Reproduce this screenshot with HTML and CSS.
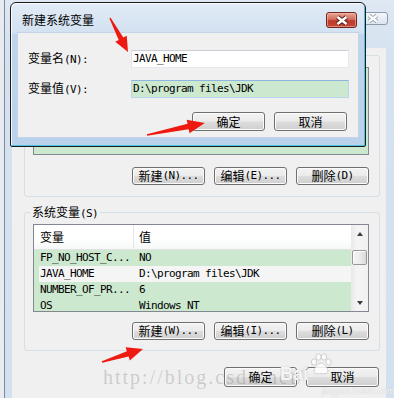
FILE: index.html
```html
<!DOCTYPE html>
<html>
<head>
<meta charset="utf-8">
<title>环境变量</title>
<link rel="stylesheet" href="styles.css">
</head>
<body>
<div class="screen">
  <div class="owin">
    <div class="otitle">
      <div class="oclose">
        <svg width="12" height="9" viewBox="0 0 12 9"><path d="M2 1.5L10 7.5M10 1.5L2 7.5" stroke="#8c97a6" stroke-width="4"/><path d="M2 1.5L10 7.5M10 1.5L2 7.5" stroke="#fff" stroke-width="2.2"/></svg>
      </div>
    </div>
    <div class="oclient">
      <fieldset class="grp">
        <legend>用户变量<span class="m">(U)</span></legend>
        <div class="lv">
          <div class="lv-main">
            <div class="lv-head"><div class="c1">变量</div><div class="c2">值</div></div>
            <div class="lv-row"><div class="c1 m">TEMP</div><div class="c2 m">%USERPROFILE%\AppData\Local\Temp</div></div>
            <div class="lv-row"><div class="c1 m">TMP</div><div class="c2 m">%USERPROFILE%\AppData\Local\Temp</div></div>
          </div>
          <div class="vs vs-empty"></div>
        </div>
        <div class="btnrow">
          <div class="btn">新建<span class="m">(N)...</span></div>
          <div class="btn">编辑<span class="m">(E)...</span></div>
          <div class="btn">删除<span class="m">(D)</span></div>
        </div>
      </fieldset>
      <fieldset class="grp grp-sys">
        <legend>系统变量<span class="m">(S)</span></legend>
        <div class="lv">
          <div class="lv-main">
            <div class="lv-head"><div class="c1">变量</div><div class="c2">值</div></div>
            <div class="lv-row"><div class="c1 m">FP_NO_HOST_C...</div><div class="c2 m">NO</div></div>
            <div class="lv-row sel"><div class="c1 m">JAVA_HOME</div><div class="c2 m">D:\program files\JDK</div></div>
            <div class="lv-row"><div class="c1 m">NUMBER_OF_PR...</div><div class="c2 m">6</div></div>
            <div class="lv-row"><div class="c1 m">OS</div><div class="c2 m">Windows_NT</div></div>
          </div>
          <div class="vs">
            <div class="vs-btn"><span class="tri-up"></span></div>
            <div class="vs-thumb"></div>
            <div class="vs-fill"></div>
            <div class="vs-btn"><span class="tri-down"></span></div>
          </div>
        </div>
        <div class="btnrow">
          <div class="btn">新建<span class="m">(W)...</span></div>
          <div class="btn">编辑<span class="m">(I)...</span></div>
          <div class="btn">删除<span class="m">(L)</span></div>
        </div>
      </fieldset>
      <div class="btnrow foot">
        <div class="btn btn-lg">确定</div>
        <div class="btn btn-lg">取消</div>
      </div>
    </div>
  </div>

  <div class="dlg">
    <div class="dlg-title">
      <span class="dlg-caption">新建系统变量</span>
      <div class="dclose">
        <svg width="14" height="11" viewBox="0 0 14 11"><path d="M2.5 2L11.5 9M11.5 2L2.5 9" stroke="#5b1f19" stroke-width="4.6"/><path d="M2.5 2L11.5 9M11.5 2L2.5 9" stroke="#fff" stroke-width="2.6"/></svg>
      </div>
    </div>
    <div class="dlg-body">
      <div class="dform">
        <div class="dlabel">变量名<span class="m">(N):</span></div>
        <div class="inp m">JAVA_HOME</div>
        <div class="dlabel">变量值<span class="m">(V):</span></div>
        <div class="inp inp-focus m">D:\program files\JDK</div>
      </div>
      <div class="dbtns">
        <div class="btn btn-d">确定</div>
        <div class="btn btn-d">取消</div>
      </div>
    </div>
  </div>

  <div class="wm">
    <span class="wm-url">http://blog.csdn.net/</span>
    <span class="wm-bai">Bai</span>
    <svg class="wm-paw" width="24" height="22" viewBox="0 0 24 22">
      <g fill="#fff" stroke="#c9c9c9" stroke-width="1">
        <ellipse cx="5" cy="9" rx="2.6" ry="3.2"/>
        <ellipse cx="9.5" cy="4" rx="2.6" ry="3.2"/>
        <ellipse cx="15" cy="4" rx="2.6" ry="3.2"/>
        <ellipse cx="19.5" cy="9" rx="2.6" ry="3.2"/>
        <path d="M12 10c-3 0-7 5-7 8s3 3 7 2.5c4 .5 7 .5 7-2.5s-4-8-7-8z"/>
      </g>
    </svg>
    <span class="wm-jy">jingyan.baidu.com</span>
  </div>

  <svg class="arrows" width="394" height="398" viewBox="0 0 394 398">
    <g fill="#ee1a12">
      <polygon transform="translate(110 18) rotate(62.1)" points="0,-0.7 23.5,-2.6 23.5,-6.5 38.5,0 23.5,6.5 23.5,2.6 0,0.7"/>
      <polygon transform="translate(147 135) rotate(-11.7)" points="0,-0.7 42,-2.8 42,-7 59,0 42,7 42,2.8 0,0.7"/>
      <polygon transform="translate(102 362) rotate(-17.6)" points="0,-0.7 27,-2.8 27,-7 43,0 27,7 27,2.8 0,0.7"/>
    </g>
  </svg>
</div>
</body>
</html>
```

FILE: styles.css
```css
* { box-sizing: border-box; }
html, body { margin: 0; padding: 0; }
body {
  width: 394px;
  height: 398px;
  overflow: hidden;
  font-family: "Noto Sans CJK SC", "Noto Sans", sans-serif;
  font-size: 12px;
  color: #000;
  background: #e8ebef;
}
.m {
  font-family: "DejaVu Sans Mono", "Liberation Mono", monospace;
  font-size: 11px;
  letter-spacing: -0.62px;
}
.screen {
  position: relative;
  width: 394px;
  height: 398px;
  overflow: hidden;
}

/* background window */
.owin {
  margin-left: 4px;
  width: 390px;
  height: 398px;
  border-left: 1px solid #7c8a9c;
  background: linear-gradient(#dfe8f3, #d6e2f0 48px, #d3e0ef);
  padding: 0 8px 0 7px;
  display: flex;
  flex-direction: column;
}
.otitle {
  height: 48px;
  flex: none;
  display: flex;
  justify-content: flex-end;
  padding-top: 12px;
}
.oclose {
  width: 30px;
  height: 13px;
  margin-right: -2px;
  border: 1px solid #8e9bad;
  border-radius: 3px;
  background: linear-gradient(#f4f7fb, #dde5ef);
  display: flex;
  align-items: center;
  justify-content: center;
}
.oclient {
  flex: 1;
  background: #f0f0f0;
  padding: 0 6px 0 12px;
}

/* group boxes */
.grp {
  margin: 0;
  padding: 0 10px 11px 8px;
  border: 1px solid #d5dfe5;
  border-radius: 3px;
  min-width: 0;
}
.grp legend {
  padding: 0 2px;
  margin-left: -3px;
  height: 14px;
  line-height: 14px;
}
.grp-sys {
  margin-top: 8px;
  padding-bottom: 10px;
}

/* list view */
.lv {
  display: flex;
  height: 88px;
  margin-top: 5px;
  border: 1px solid #828790;
  background: #cce8cf;
}
.lv-main {
  flex: 1;
  min-width: 0;
  overflow: hidden;
}
.lv-head {
  display: flex;
  height: 25px;
  line-height: 24px;
  border-bottom: 1px solid #e2e2e2;
  background: linear-gradient(#ffffff, #ffffff 55%, #f6f7f8);
}
.lv-head .c1 { border-right: 1px solid #e5e5e5; }
.c1 {
  flex: none;
  width: 100px;
  padding-left: 6px;
  white-space: nowrap;
  overflow: hidden;
}
.c2 {
  flex: 1;
  padding-left: 5px;
  white-space: nowrap;
  overflow: hidden;
}
.lv-row {
  display: flex;
  height: 16px;
  line-height: 16px;
}
.lv-row.sel {
  margin-left: 5px;
  background: #f5f5f5;
}
.lv-row.sel .c1 {
  width: 95px;
  padding-left: 1px;
}

/* scrollbar */
.vs {
  flex: none;
  width: 17px;
  display: flex;
  flex-direction: column;
  background: linear-gradient(90deg, #e9e9e9, #f4f4f4 35%, #f1f1f1);
}
.vs-empty { background: #cce8cf; }
.vs-btn {
  height: 17px;
  flex: none;
  display: flex;
  align-items: center;
  justify-content: center;
}
.tri-up {
  width: 0;
  height: 0;
  border-left: 3.5px solid transparent;
  border-right: 3.5px solid transparent;
  border-bottom: 4px solid #3c3c3c;
}
.tri-down {
  width: 0;
  height: 0;
  border-left: 3.5px solid transparent;
  border-right: 3.5px solid transparent;
  border-top: 4px solid #3c3c3c;
}
.vs-thumb {
  flex: none;
  height: 15px;
  margin: 8px 1px 0;
  border: 1px solid #989898;
  border-radius: 2px;
  background: linear-gradient(90deg, #f4f4f4, #ececec 50%, #dadada);
  box-shadow: inset 1px 1px 0 #fff;
}
.vs-fill { flex: 1; }

/* buttons */
.btnrow {
  display: flex;
  justify-content: flex-end;
  gap: 9px;
  margin-top: 12px;
}
.grp-sys .btnrow { margin-top: 10px; }
.btn {
  width: 73px;
  height: 18px;
  border: 1px solid #707070;
  border-radius: 3px;
  background: linear-gradient(#f3f3f3, #ebebeb 48%, #dddddd 52%, #cfcfcf);
  box-shadow: inset 0 0 0 1px #fbfbfb;
  display: flex;
  align-items: center;
  justify-content: center;
  line-height: 14px;
  white-space: nowrap;
}
.foot {
  margin-top: 16px;
  padding-right: 1px;
}
.btn-lg { height: 20px; }

/* foreground dialog */
.dlg {
  position: absolute;
  left: 10px;
  top: 2px;
  width: 356px;
  height: 145px;
  border: 1px solid #1b1b1b;
  border-radius: 6px 6px 2px 2px;
  background: linear-gradient(#e2ebf6, #d2e1f1 30px, #bed5ed 32px, #b9d1ea);
  box-shadow: inset 1px 1px 0 rgba(255, 255, 255, 0.85), inset -1px -1px 0 #4cc3e2;
  display: flex;
  flex-direction: column;
}
.dlg-title {
  height: 29px;
  flex: none;
  display: flex;
  align-items: flex-start;
  padding: 10px 8px 0 11px;
}
.dlg-caption {
  line-height: 14px;
}
.dclose {
  margin-left: auto;
  margin-top: -1px;
  width: 31px;
  height: 16px;
  border: 1px solid #6e2620;
  border-radius: 3px;
  background: linear-gradient(#e9a595, #d0705f 45%, #c0392b 55%, #c44a37);
  box-shadow: inset 0 0 0 1px rgba(255, 200, 190, 0.5);
  display: flex;
  align-items: center;
  justify-content: center;
}
.dlg-body {
  margin: 0 6px;
  height: 106px;
  flex: none;
  background: #f0f0f0;
  border: 1px solid #c3d4e8;
  padding: 16px 9px 0 10px;
}
.dform {
  display: grid;
  grid-template-columns: 103px 218px;
  row-gap: 10px;
  align-items: center;
}
.dlabel {
  line-height: 18px;
  white-space: nowrap;
}
.inp {
  height: 18px;
  border: 1px solid;
  border-color: #c9ced6 #e3e9ef #e3e9ef #e2e3ea;
  background: #fff;
  padding-left: 1px;
  line-height: 16px;
  white-space: nowrap;
}
.inp-focus {
  background: #cce8cf;
  border-color: #8fb6df #b8d4ef #b8d4ef #b8d4ef;
}
.dbtns {
  display: flex;
  justify-content: flex-end;
  gap: 9px;
  margin-top: 13px;
  padding-right: 2px;
}
.btn-d { height: 19px; }

/* watermark overlay */
.wm {
  position: absolute;
  left: 0;
  top: 0;
  width: 394px;
  height: 398px;
  pointer-events: none;
}
.wm-url {
  position: absolute;
  left: 103px;
  top: 367px;
  font-family: "Liberation Serif", serif;
  font-size: 20px;
  line-height: 20px;
  letter-spacing: 2px;
  color: rgba(110, 110, 110, 0.28);
  white-space: nowrap;
}
.wm-bai {
  position: absolute;
  left: 280px;
  top: 364px;
  font-family: "Liberation Sans", sans-serif;
  font-weight: bold;
  font-size: 18px;
  line-height: 20px;
  color: rgba(255, 255, 255, 0.9);
  text-shadow: 0 0 1px #b5b5b5, 0 0 1px #b5b5b5;
}
.wm-paw {
  position: absolute;
  left: 309px;
  top: 353px;
  opacity: 0.85;
}
.wm-jy {
  position: absolute;
  left: 322px;
  top: 386px;
  font-family: "Liberation Sans", sans-serif;
  font-size: 9px;
  line-height: 10px;
  color: rgba(255, 255, 255, 0.9);
  text-shadow: 0 0 1px #bbb;
}

/* annotation arrows */
.arrows {
  position: absolute;
  left: 0;
  top: 0;
  pointer-events: none;
}
```
